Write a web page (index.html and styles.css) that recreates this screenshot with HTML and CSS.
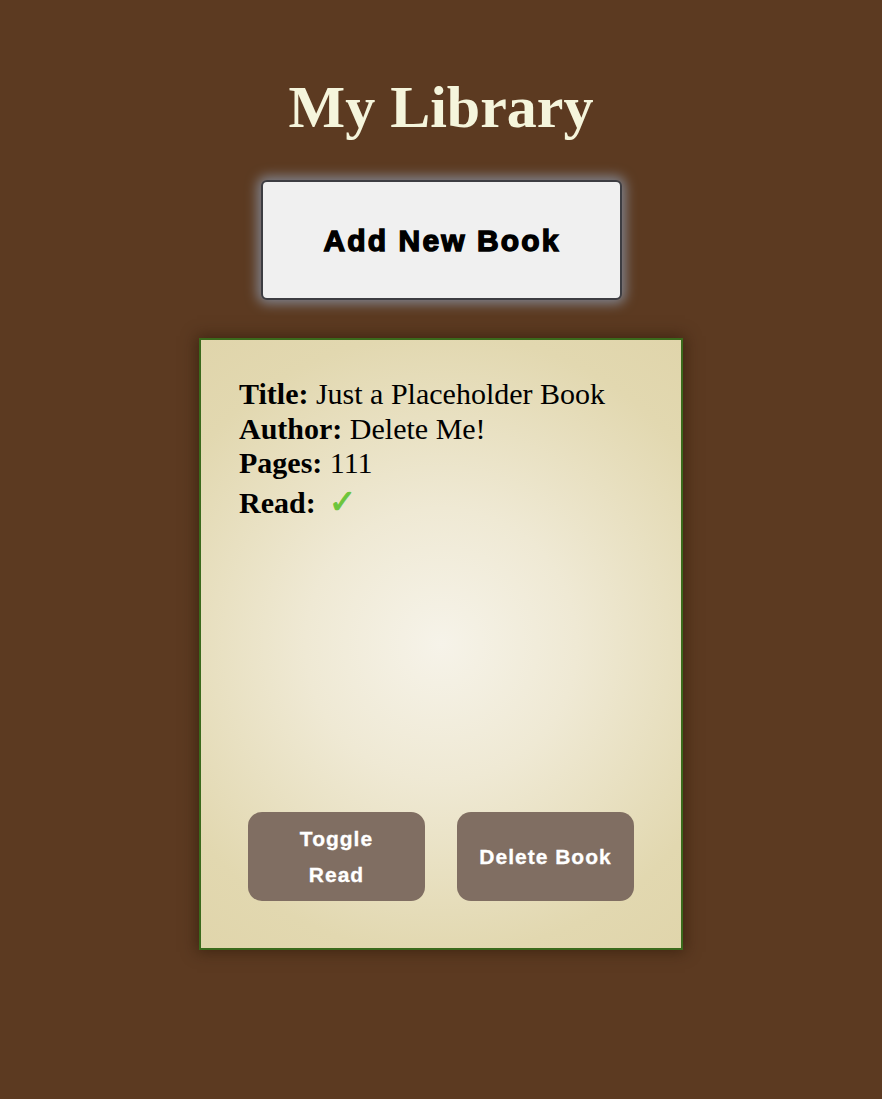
FILE: index.html
```html
<!DOCTYPE html>
<html lang="en">
<head>
<meta charset="utf-8">
<title>My Library</title>
<link rel="stylesheet" href="styles.css">
</head>
<body>
  <header class="header">
    <h1 class="title">My Library</h1>
    <button class="add-btn" type="button">Add New Book</button>
  </header>
  <main class="library">
    <article class="card">
      <div class="info">
        <div class="row"><b>Title:</b> Just a Placeholder Book</div>
        <div class="row"><b>Author:</b> Delete Me!</div>
        <div class="row"><b>Pages:</b> 111</div>
        <div class="row row-read"><b>Read:</b><span class="check">✓</span></div>
      </div>
      <div class="actions">
        <button class="card-btn" type="button">Toggle Read</button>
        <button class="card-btn" type="button">Delete Book</button>
      </div>
    </article>
  </main>
</body>
</html>
```
FILE: styles.css
```css
* { box-sizing: border-box; }

html, body {
  margin: 0;
  padding: 0;
}

body {
  background: #5c3a21;
  font-family: "Liberation Serif", "Times New Roman", serif;
  min-height: 1099px;
}

.header {
  display: flex;
  flex-direction: column;
  align-items: center;
  padding-top: 73px;
}

.title {
  margin: 0;
  font-size: 60px;
  font-weight: 700;
  line-height: 69px;
  color: #f5f5dc;
}

.add-btn {
  margin-top: 38px;
  width: 361px;
  height: 120px;
  background: #f0f0f0;
  border: 2px solid #3d3d42;
  border-radius: 6px;
  box-shadow: 0 0 12px 4px #7f8089;
  font-family: "Liberation Sans", Arial, sans-serif;
  font-weight: 700;
  font-size: 30px;
  letter-spacing: 2.1px;
  -webkit-text-stroke: 1.4px #000;
  color: #000;
  padding: 2px 0 0 2px;
}

.library {
  display: flex;
  justify-content: center;
  padding-top: 38px;
}

.card {
  width: 484px;
  height: 612px;
  border: 2px solid #3b6a1c;
  background: radial-gradient(circle at 50% 50%, #f6f3e9 0%, #efe9d4 35%, #e2d8b0 80%, #e0d5ab 100%);
  box-shadow: 0 0 14px 2px rgba(40, 20, 5, 0.55);
  display: flex;
  flex-direction: column;
  justify-content: space-between;
  padding: 37px 38px 47px 38px;
}

.info {
  font-size: 30px;
  color: #000;
}

.row {
  line-height: 34.5px;
}

.row-read {
  margin-top: 4.5px;
  display: flex;
  align-items: baseline;
}

.check {
  margin-left: 13px;
  font-family: "DejaVu Sans", sans-serif;
  font-size: 33px;
  line-height: 1;
  color: #6cc53c;
  font-weight: 700;
  -webkit-text-stroke: 1px #6cc53c;
}

.actions {
  display: flex;
  justify-content: center;
  gap: 32px;
}

.card-btn {
  width: 177px;
  padding: 9px 22px;
  background: #806e62;
  border: none;
  border-radius: 14px;
  color: #fff;
  font-family: "Liberation Sans", Arial, sans-serif;
  font-weight: 700;
  font-size: 21px;
  letter-spacing: 1px;
  line-height: 35.5px;
  -webkit-text-stroke: 0.3px #fff;
}
```
